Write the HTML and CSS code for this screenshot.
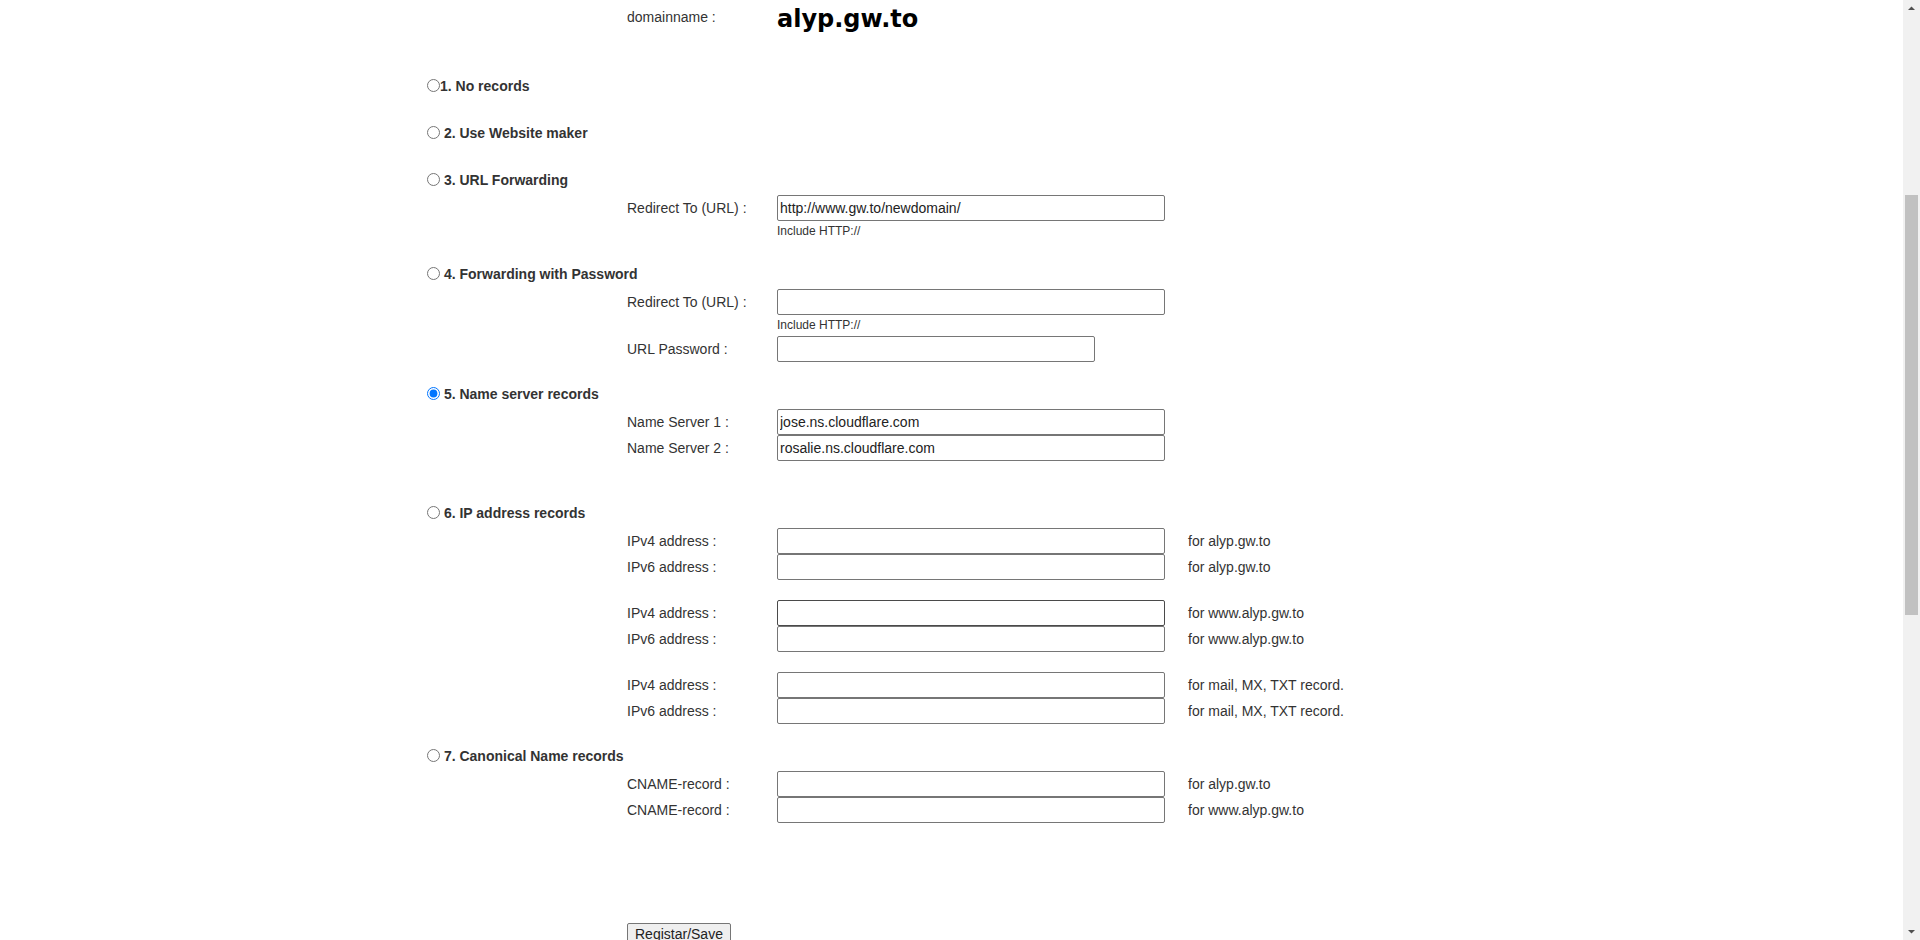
FILE: index.html
```html
<!DOCTYPE html>
<html lang="en">
<head>
<meta charset="utf-8">
<title>Domain settings</title>
<link rel="stylesheet" href="styles.css">
</head>
<body>
<div class="viewport">
  <main class="page">
    <form class="wrap">
      <div class="domain-row">
        <span class="lbl">domainname :</span>
        <span class="dname">alyp.gw.to</span>
      </div>

      <section class="sec bare first">
        <div class="opt"><input type="radio" name="rtype"><label>1. No records</label></div>
      </section>

      <section class="sec bare">
        <div class="opt"><input type="radio" name="rtype"> <label>2. Use Website maker</label></div>
      </section>

      <section class="sec">
        <div class="opt"><input type="radio" name="rtype"> <label>3. URL Forwarding</label></div>
        <div class="fields">
          <div class="field"><span class="lbl">Redirect To (URL) :</span><input type="text" value="http://www.gw.to/newdomain/"></div>
          <div class="hint">Include HTTP://</div>
        </div>
      </section>

      <section class="sec">
        <div class="opt"><input type="radio" name="rtype"> <label>4. Forwarding with Password</label></div>
        <div class="fields">
          <div class="field"><span class="lbl">Redirect To (URL) :</span><input type="text" value=""></div>
          <div class="hint">Include HTTP://</div>
          <div class="field"><span class="lbl">URL Password :</span><input type="password" class="short" value=""></div>
        </div>
      </section>

      <section class="sec">
        <div class="opt"><input type="radio" name="rtype" checked> <label>5. Name server records</label></div>
        <div class="fields">
          <div class="field"><span class="lbl">Name Server 1 :</span><input type="text" value="jose.ns.cloudflare.com"></div>
          <div class="field"><span class="lbl">Name Server 2 :</span><input type="text" value="rosalie.ns.cloudflare.com"></div>
        </div>
        <div class="spacer"></div>
      </section>

      <section class="sec">
        <div class="opt"><input type="radio" name="rtype"> <label>6. IP address records</label></div>
        <div class="fields">
          <div class="group">
            <div class="field"><span class="lbl">IPv4 address :</span><input type="text" value=""><span class="note">for alyp.gw.to</span></div>
            <div class="field"><span class="lbl">IPv6 address :</span><input type="text" value=""><span class="note">for alyp.gw.to</span></div>
          </div>
          <div class="group">
            <div class="field"><span class="lbl">IPv4 address :</span><input type="text" class="hovered" value=""><span class="note">for www.alyp.gw.to</span></div>
            <div class="field"><span class="lbl">IPv6 address :</span><input type="text" value=""><span class="note">for www.alyp.gw.to</span></div>
          </div>
          <div class="group">
            <div class="field"><span class="lbl">IPv4 address :</span><input type="text" value=""><span class="note">for mail, MX, TXT record.</span></div>
            <div class="field"><span class="lbl">IPv6 address :</span><input type="text" value=""><span class="note">for mail, MX, TXT record.</span></div>
          </div>
        </div>
      </section>

      <section class="sec">
        <div class="opt"><input type="radio" name="rtype"> <label>7. Canonical Name records</label></div>
        <div class="fields">
          <div class="field"><span class="lbl">CNAME-record :</span><input type="text" value=""><span class="note">for alyp.gw.to</span></div>
          <div class="field"><span class="lbl">CNAME-record :</span><input type="text" value=""><span class="note">for www.alyp.gw.to</span></div>
        </div>
      </section>

      <div class="actions"><button type="button">Registar/Save</button></div>
    </form>
  </main>

  <div class="scrollbar" aria-hidden="true">
    <div class="sb-btn">
      <svg width="17" height="17" viewBox="0 0 17 17"><polygon points="5,10 8.5,6.5 12,10" fill="#505050"/></svg>
    </div>
    <div class="sb-track"><div class="sb-thumb"></div></div>
    <div class="sb-btn">
      <svg width="17" height="17" viewBox="0 0 17 17"><polygon points="5,7 8.5,10.5 12,7" fill="#505050"/></svg>
    </div>
  </div>
</div>
</body>
</html>
```

FILE: styles.css
```css
* { box-sizing: border-box; }

html, body {
  margin: 0;
  padding: 0;
  background: #fff;
}

body {
  font-family: "Liberation Sans", Arial, sans-serif;
  font-size: 14px;
  color: #333;
}

.viewport {
  display: flex;
  height: 940px;
  overflow: hidden;
}

.page {
  flex: 1;
  min-width: 0;
  overflow: hidden;
}

.wrap {
  width: 1059px;
  margin: 0 auto;
}

.domain-row {
  display: flex;
  align-items: center;
  height: 34px;
  padding-left: 205px;
}

.lbl {
  width: 150px;
  flex: none;
}

.dname {
  font-family: "DejaVu Sans", Verdana, sans-serif;
  font-weight: bold;
  font-size: 24px;
  color: #000;
  margin-top: 3px;
}

.sec { padding-bottom: 22px; }
.sec.bare { padding-bottom: 27px; }
.sec.first { margin-top: 42px; }

.opt {
  height: 20px;
  line-height: 20px;
  font-weight: bold;
}

.opt input {
  width: 13px;
  height: 13px;
  margin: 3px 0 0 5px;
  vertical-align: top;
}

.fields { margin-top: 5px; }

.group + .group { margin-top: 20px; }

.field {
  display: flex;
  align-items: center;
  height: 26px;
  padding-left: 205px;
}

.field input {
  width: 388px;
  height: 26px;
  margin: 0;
  padding: 1px 2px;
  border: 1px solid #767676;
  border-radius: 2px;
  background: #fff;
  font: 14px "Liberation Sans", Arial, sans-serif;
  color: #222;
  flex: none;
}

.field input.short { width: 318px; }
.field input.hovered { border-color: #4a4a4a; }

.note { margin-left: 23px; }

.hint {
  padding-left: 355px;
  font-size: 12px;
  height: 21px;
  line-height: 21px;
}

.spacer { height: 20px; }

.actions {
  padding-left: 205px;
  margin-top: 78px;
}

.actions button {
  font: 14px "Liberation Sans", Arial, sans-serif;
  color: #222;
  padding: 1px 7px;
  border: 1px solid #767676;
  border-radius: 2px;
  background: #efefef;
  height: 22px;
}

.scrollbar {
  width: 17px;
  flex: none;
  display: flex;
  flex-direction: column;
  background: #f1f1f1;
}

.sb-btn {
  height: 17px;
  flex: none;
}

.sb-btn svg { display: block; }

.sb-track {
  flex: 1;
  padding-top: 178px;
}

.sb-thumb {
  width: 13px;
  height: 420px;
  margin-left: 2px;
  background: #c1c1c1;
}
```
